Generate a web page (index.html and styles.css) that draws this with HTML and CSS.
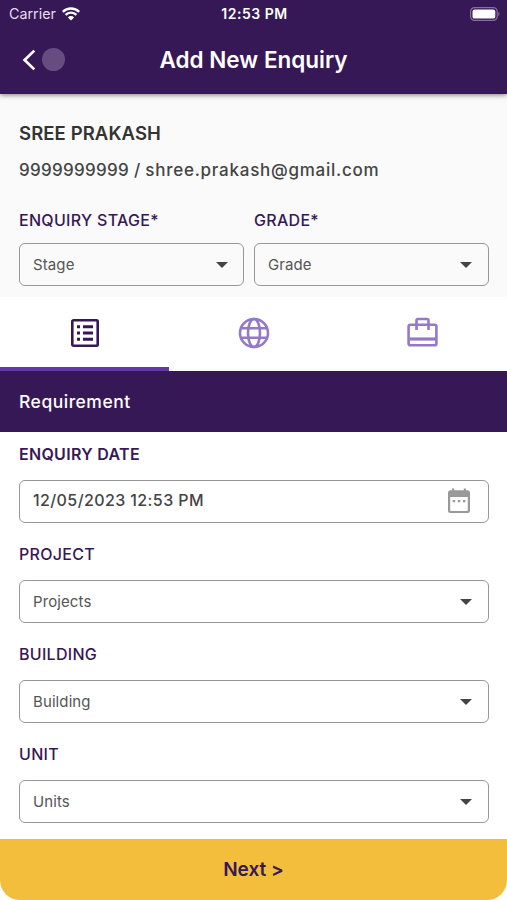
FILE: index.html
```html
<!DOCTYPE html>
<html lang="en">
<head>
    <meta charset="utf-8">
    <meta name="viewport" content="width=device-width, initial-scale=1">
    <title>Add New Enquiry</title>
    <link rel="stylesheet" href="styles.css">
</head>
<body>
    <div class="screen">
        <header class="header">
            <div class="status-bar">
                <div class="carrier">
                    <span class="carrier-name">Carrier</span>
                    <svg width="18" height="14" viewBox="0 0 18 14" fill="none" stroke="#fff" stroke-width="2.3">
                        <path d="M.8 4.9a11.6 11.6 0 0 1 16.4 0M3.6 7.9a7.6 7.6 0 0 1 10.8 0"/>
                        <path d="M9 13.6 5.9 10.4a4.4 4.4 0 0 1 6.2 0z" fill="#fff" stroke="none"/>
                    </svg>
                </div>
                <span class="time">12:53 PM</span>
                <svg class="battery" width="30" height="14" viewBox="0 0 30 14">
                    <rect x=".6" y=".6" width="26.6" height="12.8" rx="4" fill="none" stroke="#84709b" stroke-width="1.2"/>
                    <rect x="2.5" y="2.4" width="22.8" height="9.2" rx="2.2" fill="#fff"/>
                    <path d="M28.3 4.8c1.6.7 1.6 3.7 0 4.4z" fill="#84709b"/>
                </svg>
            </div>
            <div class="title-bar">
                <div class="back">
                    <svg width="14" height="22" viewBox="0 0 14 22" fill="none" stroke="#fff" stroke-width="2.7">
                        <path d="M12.3 1.6 2.6 11l9.7 9.4"/>
                    </svg>
                    <span class="touch"></span>
                </div>
                <h1 class="title">Add New Enquiry</h1>
            </div>
        </header>

        <section class="contact">
            <h2 class="name">SREE PRAKASH</h2>
            <p class="details"><span class="phone">9999999999 / </span>shree.prakash@gmail.com</p>
            <div class="row">
                <div class="field stage">
                    <label class="label">ENQUIRY STAGE*</label>
                    <div class="box"><span>Stage</span><i class="arrow"></i></div>
                </div>
                <div class="field grade">
                    <label class="label">GRADE*</label>
                    <div class="box"><span>Grade</span><i class="arrow"></i></div>
                </div>
            </div>
        </section>

        <nav class="tabs">
            <div class="tab active">
                <svg width="28" height="28" viewBox="0 0 28 28">
                    <rect x="1.3" y="1.3" width="25.4" height="25.4" rx="1.2" fill="none" stroke="#371856" stroke-width="2.6"/>
                    <path d="M6 6.2h3v3H6zm6 0h10v3H12zM6 12.5h3v3H6zm6 0h10v3H12zM6 18.8h3v3H6zm6 0h10v3H12z" fill="#371856"/>
                </svg>
            </div>
            <div class="tab">
                <svg width="32" height="32" viewBox="0 0 32 32" fill="none" stroke="#9479ca" stroke-width="2.6">
                    <circle cx="16" cy="16" r="14"/>
                    <ellipse cx="16" cy="16" rx="6" ry="14"/>
                    <path d="M3 11.3h26M3 20.7h26"/>
                </svg>
            </div>
            <div class="tab">
                <svg width="32" height="32" viewBox="0 0 32 32" fill="none" stroke="#9479ca" stroke-width="2.6">
                    <rect x="1.6" y="7.8" width="27.8" height="20.4" rx="1.8"/>
                    <path d="M9.5 13V3.4Q9.5 2 10.9 2h9.2q1.4 0 1.4 1.4V13"/>
                    <path d="M1.6 22h27.8" stroke-width="3.2"/>
                </svg>
            </div>
        </nav>

        <div class="section-title">Requirement</div>

        <section class="form">
            <div class="field">
                <label class="label label-date">ENQUIRY DATE</label>
                <div class="box date">
                    <span>12/05/2023 12:53 PM</span>
                    <svg width="24" height="26" viewBox="0 0 24 26">
                        <path d="M4 2.2h1V.6h2.2v1.6h9.6V.6H19v1.6h1.2A2.8 2.8 0 0 1 23 5v17.6a2.5 2.5 0 0 1-2.5 2.5h-17A2.5 2.5 0 0 1 1 22.6V5a2.8 2.8 0 0 1 3-2.8zM3.2 9v13.1q0 .9.9.9h15.8q.9 0 .9-.9V9z" fill="#999" fill-rule="evenodd"/>
                        <path d="M5.7 12h2.5v2.3H5.7zm5.1 0h2.5v2.3h-2.5zm5.1 0h2.5v2.3h-2.5z" fill="#999"/>
                    </svg>
                </div>
            </div>
            <div class="field">
                <label class="label">PROJECT</label>
                <div class="box"><span>Projects</span><i class="arrow"></i></div>
            </div>
            <div class="field">
                <label class="label">BUILDING</label>
                <div class="box"><span>Building</span><i class="arrow"></i></div>
            </div>
            <div class="field">
                <label class="label">UNIT</label>
                <div class="box"><span>Units</span><i class="arrow"></i></div>
            </div>
        </section>

        <button class="next">Next &gt;</button>
    </div>
</body>
</html>
```

FILE: styles.css
```css
* {
    box-sizing: border-box;
}

body {
    margin: 0;
    font-family: Inter, "Liberation Sans", sans-serif;
    background-color: #fff;
    color: #444;
}

.screen {
    display: flex;
    flex-direction: column;
    height: 900px;
    overflow: hidden;
}

.header {
    position: relative;
    height: 94px;
    background-color: #371856;
    color: #fff;
    box-shadow: 0 1px 5px rgba(0, 0, 0, 0.5);
}

.status-bar {
    display: grid;
    grid-template-columns: 1fr auto 1fr;
    align-items: center;
    height: 27px;
    padding: 0 7px 0 9px;
}

.carrier {
    display: flex;
    align-items: center;
    gap: 6px;
    font-size: 14.3px;
    color: #e6ddf0;
}

.time {
    font-size: 14px;
    font-weight: 600;
    letter-spacing: 0.5px;
}

.battery {
    justify-self: end;
}

.title-bar {
    display: grid;
    grid-template-columns: 1fr auto 1fr;
    align-items: center;
    height: 66px;
}

.back {
    display: flex;
    align-items: center;
    gap: 6px;
    padding: 0 0 1px 22px;
}

.touch {
    width: 23px;
    height: 23px;
    border-radius: 50%;
    background-color: #664c80;
}

.title {
    margin: 0;
    font-size: 22.5px;
    font-weight: 600;
    line-height: 30px;
}

.contact {
    height: 203px;
    padding: 26px 18px 0 19px;
    background-color: #fafafa;
}

.name {
    margin: 0;
    font-size: 18.5px;
    font-weight: 600;
    line-height: 26px;
    letter-spacing: 0.1px;
    color: #333;
}

.details {
    margin: 11px 0 0;
    font-size: 17px;
    font-weight: 500;
    line-height: 26px;
    letter-spacing: 0.75px;
}

.phone {
    letter-spacing: 0.3px;
}

.row {
    display: flex;
    gap: 10px;
    margin-top: 27px;
}

.stage {
    width: 225px;
}

.grade {
    width: 235px;
}

.label {
    display: block;
    width: max-content;
    height: 20px;
    margin-bottom: 16px;
    font-size: 16px;
    font-weight: 500;
    line-height: 20px;
    letter-spacing: 0.3px;
    color: #371856;
}

.row .label {
    margin-bottom: 13px;
}

.label-date {
    font-weight: 600;
}

.box {
    display: flex;
    align-items: center;
    justify-content: space-between;
    height: 43px;
    padding: 0 16px 0 13px;
    border: 1px solid #979797;
    border-radius: 6px;
    font-size: 15px;
    letter-spacing: 0.1px;
    color: #555;
}

.arrow {
    border: 6.5px solid transparent;
    border-top-color: #444;
    border-bottom: 0;
}

.stage .box {
    padding-right: 15px;
}

.date {
    padding: 0 17px 3px 13px;
    font-size: 16px;
    font-weight: 500;
    letter-spacing: 0.4px;
    color: #444;
}

.date svg {
    margin-top: 2px;
}

.tabs {
    display: flex;
    height: 74px;
}

.tab {
    display: flex;
    flex: 1;
    align-items: center;
    justify-content: center;
    padding-top: 2px;
    border-bottom: 4px solid transparent;
}

.active {
    border-bottom-color: #6437aa;
}

.section-title {
    height: 61px;
    padding-left: 19px;
    background-color: #371856;
    color: #fff;
    font-size: 17.5px;
    font-weight: 500;
    line-height: 61px;
    letter-spacing: 0.5px;
}

.form {
    display: flex;
    flex-direction: column;
    gap: 21px;
    height: 407px;
    padding: 12px 18px 0 19px;
}

.next {
    height: 61px;
    border: 0;
    border-radius: 0 0 20px 20px;
    background-color: #f2be3b;
    color: #371856;
    font-family: inherit;
    font-size: 19px;
    font-weight: 600;
}
```
